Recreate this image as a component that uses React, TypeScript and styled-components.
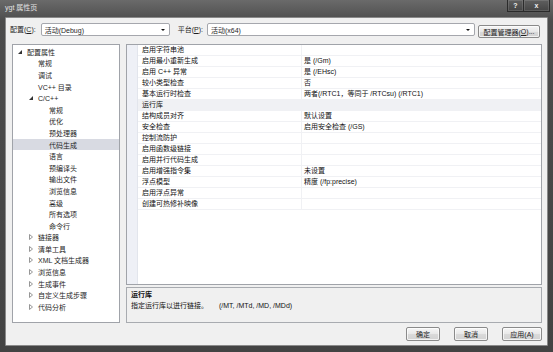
import {FC} from "react"
import styled, {createGlobalStyle} from "styled-components"

const GlobalStyle = createGlobalStyle`
    html, body {
        margin: 0;
        padding: 0;
        background: #3a3a3a;
    }
    body {
        font-family: "Liberation Sans", "Noto Sans CJK SC", sans-serif;
        font-size: 7px;
        color: #1e1e1e;
    }
`

const Window = styled.div`
    width: 553px;
    height: 352px;
    box-sizing: border-box;
    display: flex;
    flex-direction: column;
    padding: 0 5px 6px 5px;
    background: linear-gradient(180deg, #6a6a6a 0%, #4c4c4c 6%, #434343 100%);
    overflow: hidden;
`

const TitleBar = styled.div`
    height: 17px;
    display: flex;
    align-items: flex-start;
    justify-content: space-between;
`

const Title = styled.span`
    color: #e4e4e4;
    padding: 4px 0 0 0;
    line-height: 8px;
`

const CaptionButtons = styled.div`
    display: flex;
    margin-right: -2px;
`

const CaptionButton = styled.div<{$wide?: boolean}>`
    width: ${p => (p.$wide ? 27 : 17)}px;
    height: 12px;
    box-sizing: border-box;
    border: 1px solid #2b2b2b;
    border-top: none;
    margin-left: -1px;
    background: linear-gradient(180deg, #5f5f5f, #454545);
    box-shadow: inset 0 0 0 1px rgba(255, 255, 255, 0.12);
    color: #f0f0f0;
    font-weight: bold;
    font-size: 7px;
    display: flex;
    align-items: center;
    justify-content: center;
`

const Client = styled.div`
    flex: 1;
    display: flex;
    flex-direction: column;
    background: #f0f0f0;
    border: 1px solid #8a8a8a;
    border-radius: 1px;
    padding: 0 5px 4px 6px;
    min-height: 0;
`

const Toolbar = styled.div`
    height: 26px;
    display: flex;
    align-items: flex-start;
    padding-top: 5px;
    box-sizing: border-box;
    margin-left: -2px;
`

const Label = styled.span<{$gap: number}>`
    line-height: 13px;
    margin-right: ${p => p.$gap}px;
`

const Combo = styled.div<{$width: number}>`
    width: ${p => p.$width}px;
    height: 13px;
    box-sizing: border-box;
    border: 1px solid #a5a7ad;
    border-radius: 2px;
    background: #fff;
    display: flex;
    align-items: center;
    justify-content: space-between;
    padding: 0 4px 0 3px;
    margin-right: 8px;
`

const ComboArrow = styled.span`
    width: 0;
    height: 0;
    border-left: 2px solid transparent;
    border-right: 2px solid transparent;
    border-top: 2px solid #111;
`

const Button = styled.div<{$width: number}>`
    width: ${p => p.$width}px;
    height: 13px;
    box-sizing: border-box;
    border: 1px solid #8a8a8a;
    border-radius: 2px;
    background: linear-gradient(180deg, #f6f6f6 0%, #e8e8e8 50%, #dadada 51%, #d2d2d2 100%);
    box-shadow: inset 0 0 0 1px rgba(255, 255, 255, 0.7);
    display: flex;
    align-items: center;
    justify-content: center;
    color: #222;
`

const ManagerButton = styled(Button)`
    margin-top: 2px;
    margin-left: -5px;
`

const Main = styled.div`
    flex: 1;
    display: flex;
    gap: 6px;
    min-height: 0;
`

const Tree = styled.div`
    width: 108px;
    box-sizing: border-box;
    background: #fff;
    border: 1px solid #a0a3a9;
    padding-top: 1px;
`

const TreeRow = styled.div<{$level: number; $selected?: boolean}>`
    height: 11.6px;
    display: flex;
    align-items: center;
    padding-left: ${p => 3 + p.$level * 11}px;
    background: ${p => (p.$selected ? "#d8dae2" : "transparent")};
    white-space: nowrap;
`

const Glyph = styled.span`
    width: 11px;
    height: 11px;
    display: flex;
    align-items: center;
    padding-left: 2px;
    box-sizing: border-box;
`

const RightColumn = styled.div`
    flex: 1;
    display: flex;
    flex-direction: column;
    gap: 2px;
    min-width: 0;
`

const Grid = styled.div`
    flex: 1;
    box-sizing: border-box;
    background: #fff;
    border: 1px solid #a0a3a9;
    display: flex;
`

const Gutter = styled.div`
    width: 10px;
    background: #eef0f6;
    border-right: 1px solid #e2e5ec;
`

const Rows = styled.div`
    flex: 1;
`

const GridRow = styled.div<{$selected?: boolean}>`
    display: grid;
    grid-template-columns: 163px 1fr;
    height: 11px;
    box-sizing: border-box;
    border-bottom: 1px solid #f0f1f4;
    background: ${p => (p.$selected ? "#f0f1f4" : "transparent")};
`

const Cell = styled.div<{$value?: boolean}>`
    line-height: 10px;
    padding-left: ${p => (p.$value ? 2 : 4)}px;
    border-left: ${p => (p.$value ? "1px solid #f0f1f4" : "none")};
    color: #111;
    white-space: nowrap;
    overflow: hidden;
`

const Description = styled.div`
    height: 36px;
    box-sizing: border-box;
    border: 1px solid #a8abb0;
    background: #f0f0f0;
    padding: 1px 4px;
    line-height: 11px;
    color: #111;
`

const DescTitle = styled.div`
    font-weight: bold;
`

const DescFlags = styled.span`
    margin-left: 11px;
`

const Footer = styled.div`
    display: flex;
    justify-content: flex-end;
    gap: 14px;
    padding-top: 4px;
    height: 18px;
    box-sizing: border-box;
`

const FooterButton = styled(Button)`
    height: 14px;
`

const Expanded: FC = () => (
    <svg width="4" height="4" viewBox="0 0 4 4">
        <path d="M4 0 L4 4 L0 4 Z" fill="#333" />
    </svg>
)

const Collapsed: FC = () => (
    <svg width="4" height="6" viewBox="0 0 4 6">
        <path d="M0.5 0.5 L3.5 3 L0.5 5.5 Z" fill="none" stroke="#8a8a8a" strokeWidth="0.9" />
    </svg>
)

type TreeItem = {label: string; level: number; kind?: "open" | "closed"; selected?: boolean}

const treeItems: TreeItem[] = [
    {label: "配置属性", level: 0, kind: "open"},
    {label: "常规", level: 1},
    {label: "调试", level: 1},
    {label: "VC++ 目录", level: 1},
    {label: "C/C++", level: 1, kind: "open"},
    {label: "常规", level: 2},
    {label: "优化", level: 2},
    {label: "预处理器", level: 2},
    {label: "代码生成", level: 2, selected: true},
    {label: "语言", level: 2},
    {label: "预编译头", level: 2},
    {label: "输出文件", level: 2},
    {label: "浏览信息", level: 2},
    {label: "高级", level: 2},
    {label: "所有选项", level: 2},
    {label: "命令行", level: 2},
    {label: "链接器", level: 1, kind: "closed"},
    {label: "清单工具", level: 1, kind: "closed"},
    {label: "XML 文档生成器", level: 1, kind: "closed"},
    {label: "浏览信息", level: 1, kind: "closed"},
    {label: "生成事件", level: 1, kind: "closed"},
    {label: "自定义生成步骤", level: 1, kind: "closed"},
    {label: "代码分析", level: 1, kind: "closed"},
]

const properties: [string, string][] = [
    ["启用字符串池", ""],
    ["启用最小重新生成", "是 (/Gm)"],
    ["启用 C++ 异常", "是 (/EHsc)"],
    ["较小类型检查", "否"],
    ["基本运行时检查", "两者(/RTC1，等同于 /RTCsu) (/RTC1)"],
    ["运行库", ""],
    ["结构成员对齐", "默认设置"],
    ["安全检查", "启用安全检查 (/GS)"],
    ["控制流防护", ""],
    ["启用函数级链接", ""],
    ["启用并行代码生成", ""],
    ["启用增强指令集", "未设置"],
    ["浮点模型", "精度 (/fp:precise)"],
    ["启用浮点异常", ""],
    ["创建可热修补映像", ""],
]

const App: FC = () => (
    <>
        <GlobalStyle />
        <Window>
            <TitleBar>
                <Title>ygt 属性页</Title>
                <CaptionButtons>
                    <CaptionButton>?</CaptionButton>
                    <CaptionButton $wide>x</CaptionButton>
                </CaptionButtons>
            </TitleBar>
            <Client>
                <Toolbar>
                    <Label $gap={5}>配置(<u>C</u>):</Label>
                    <Combo $width={129}>
                        <span>活动(Debug)</span>
                        <ComboArrow />
                    </Combo>
                    <Label $gap={4}>平台(<u>P</u>):</Label>
                    <Combo $width={268}>
                        <span>活动(x64)</span>
                        <ComboArrow />
                    </Combo>
                    <ManagerButton $width={62}>配置管理器(<u>O</u>)...</ManagerButton>
                </Toolbar>
                <Main>
                    <Tree>
                        {treeItems.map((item, i) => (
                            <TreeRow key={i} $level={item.level} $selected={item.selected}>
                                <Glyph>
                                    {item.kind === "open" && <Expanded />}
                                    {item.kind === "closed" && <Collapsed />}
                                </Glyph>
                                {item.label}
                            </TreeRow>
                        ))}
                    </Tree>
                    <RightColumn>
                        <Grid>
                            <Gutter />
                            <Rows>
                                {properties.map(([name, value], i) => (
                                    <GridRow key={i} $selected={name === "运行库"}>
                                        <Cell>{name}</Cell>
                                        <Cell $value>{value}</Cell>
                                    </GridRow>
                                ))}
                            </Rows>
                        </Grid>
                        <Description>
                            <DescTitle>运行库</DescTitle>
                            <div>
                                指定运行库以进行链接。
                                <DescFlags>(/MT, /MTd, /MD, /MDd)</DescFlags>
                            </div>
                        </Description>
                    </RightColumn>
                </Main>
                <Footer>
                    <FooterButton $width={34}>确定</FooterButton>
                    <FooterButton $width={34}>取消</FooterButton>
                    <FooterButton $width={40}>应用(A)</FooterButton>
                </Footer>
            </Client>
        </Window>
    </>
)

export default App
